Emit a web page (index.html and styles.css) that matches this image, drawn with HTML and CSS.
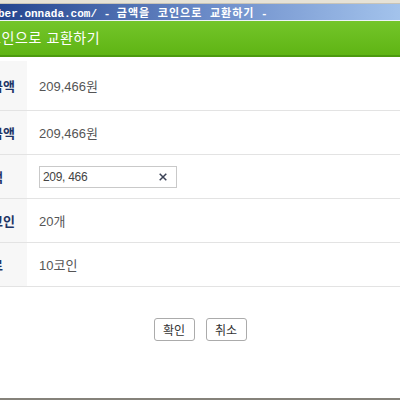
FILE: index.html
```html
<html lang="ko">
<head>
    <meta charset="UTF-8">
    <title>금액을 코인으로 교환하기</title>
    <link rel="stylesheet" href="styles.css">
</head>
<body>
    <div class="window">
        <div class="frame-top"></div>
        <div class="titlebar"><span class="title-text">http://member.onnada.com/ - <span class="title-ko">금액을 코인으로 교환하기</span> -</span></div>
        <div class="header"><span class="header-text">금액을 코인으로 교환하기</span></div>

        <div class="form">
            <div class="row first">
                <div class="label"><span>보유금액</span></div>
                <div class="value">209,466원</div>
            </div>
            <div class="row">
                <div class="label"><span>교환금액</span></div>
                <div class="value">209,466원</div>
            </div>
            <div class="row">
                <div class="label"><span>교환액</span></div>
                <div class="value">
                    <div class="input-box">
                        <input type="text" value="209, 466">
                        <svg class="clear" width="8" height="8" viewBox="0 0 8 8">
                            <path d="M0.7 0.7 L7.3 7.3 M7.3 0.7 L0.7 7.3" stroke="#3b4256" stroke-width="1.5" fill="none"/>
                        </svg>
                    </div>
                </div>
            </div>
            <div class="row">
                <div class="label"><span>교환코인</span></div>
                <div class="value">20개</div>
            </div>
            <div class="row">
                <div class="label"><span>수수료</span></div>
                <div class="value">10코인</div>
            </div>
        </div>

        <div class="buttons">
            <button class="btn">확인</button>
            <button class="btn">취소</button>
        </div>

        <div class="spacer"></div>
        <div class="frame-bottom"></div>
    </div>
</body>
</html>
```

FILE: styles.css
```css
* {
    margin: 0;
    padding: 0;
    box-sizing: border-box;
}

body {
    width: 400px;
    height: 400px;
    overflow: hidden;
    background: #fff;
    font-family: "Liberation Sans", "Noto Sans CJK KR", sans-serif;
}

.window {
    display: flex;
    flex-direction: column;
    height: 400px;
}

/* Window frame */
.frame-top {
    height: 4px;
    background: #e6e2d6;
    border-bottom: 1px solid #c8c4b8;
}

.titlebar {
    display: flex;
    align-items: center;
    height: 17px;
    background: linear-gradient(to right, #24458f, #6f8fcb 55%, #a3c3ec);
    border-bottom: 1px solid #eef2f8;
    color: #fff;
    font-family: "Liberation Mono", "Noto Sans CJK KR", monospace;
    font-weight: bold;
    font-size: 11px;
    white-space: nowrap;
    overflow: hidden;
}

.title-text {
    flex-shrink: 0;
    margin-left: -68px;
}

.title-ko {
    letter-spacing: 1px;
}

/* Green header */
.header {
    display: flex;
    align-items: center;
    height: 36px;
    background: linear-gradient(to bottom, #74c52a, #5fb414);
    border-bottom: 2px solid #4c9a0e;
    color: #fff;
    font-family: "Noto Sans CJK KR", sans-serif;
    font-size: 14px;
    letter-spacing: 0.6px;
    white-space: nowrap;
    overflow: hidden;
}

.header-text {
    flex-shrink: 0;
    margin-left: -57px;
    padding-bottom: 2px;
}

/* Form rows */
.form {
    margin-top: 4px;
}

.row {
    display: flex;
    height: 44px;
    border-bottom: 1px solid #e3e3e3;
}

.row.first {
    height: 50px;
}

.label {
    display: flex;
    align-items: center;
    width: 27px;
    background: #f7f7f7;
    color: #1f3566;
    font-family: "Noto Sans CJK KR", sans-serif;
    font-weight: bold;
    font-size: 13px;
    white-space: nowrap;
    overflow: hidden;
}

.label span {
    flex-shrink: 0;
    margin-left: -33px;
}

.value {
    flex: 1;
    padding-left: 12px;
    color: #555;
    font-size: 13px;
    display: flex;
    align-items: center;
}

.input-box {
    display: flex;
    align-items: center;
    width: 138px;
    height: 22px;
    border: 1px solid #c9c9c9;
    background: #fff;
}

.input-box input {
    flex: 1;
    width: 100px;
    border: none;
    outline: none;
    padding-left: 3px;
    color: #444;
    font-family: "Liberation Sans", sans-serif;
    font-size: 12px;
    letter-spacing: -0.3px;
    background: transparent;
}

.clear {
    margin-right: 9px;
}

/* Buttons */
.buttons {
    display: flex;
    justify-content: center;
    gap: 11px;
    margin-top: 31px;
}

.btn {
    width: 41px;
    height: 23px;
    background: #fff;
    border: 1px solid #ababab;
    border-radius: 3px;
    color: #333;
    font-family: "Noto Sans CJK KR", sans-serif;
    font-size: 12px;
    cursor: pointer;
}

.spacer {
    flex: 1;
}

.frame-bottom {
    height: 2px;
    background: #85827a;
}
```
